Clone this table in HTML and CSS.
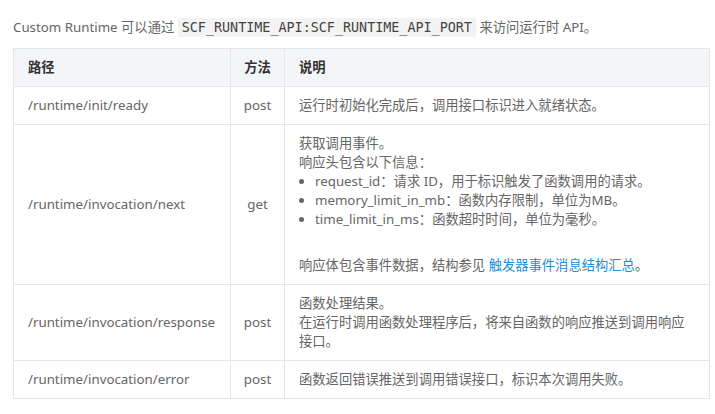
FILE: index.html
```html
<!DOCTYPE html>
<html lang="zh-CN">
<head>
    <meta charset="UTF-8">
    <meta name="viewport" content="width=device-width, initial-scale=1.0">
    <title>Custom Runtime API</title>
    <link rel="stylesheet" href="styles.css">
</head>
<body>

<div class="doc">
    <p class="intro">Custom Runtime 可以通过 <code>SCF_RUNTIME_API:SCF_RUNTIME_API_PORT</code> 来访问运行时 API。</p>

    <table class="api-table">
        <thead>
            <tr>
                <th class="col-path">路径</th>
                <th class="col-method">方法</th>
                <th class="col-desc">说明</th>
            </tr>
        </thead>
        <tbody>
            <tr>
                <td>/runtime/init/ready</td>
                <td class="method">post</td>
                <td>运行时初始化完成后，调用接口标识进入就绪状态。</td>
            </tr>
            <tr>
                <td>/runtime/invocation/next</td>
                <td class="method">get</td>
                <td>
                    获取调用事件。<br>
                    响应头包含以下信息：
                    <ul class="headers">
                        <li>request_id：请求 ID，用于标识触发了函数调用的请求。</li>
                        <li>memory_limit_in_mb：函数内存限制，单位为MB。</li>
                        <li>time_limit_in_ms：函数超时时间，单位为毫秒。</li>
                    </ul>
                    <p class="note">响应体包含事件数据，结构参见 <a href="#">触发器事件消息结构汇总</a>。</p>
                </td>
            </tr>
            <tr>
                <td>/runtime/invocation/response</td>
                <td class="method">post</td>
                <td>函数处理结果。<br>在运行时调用函数处理程序后，将来自函数的响应推送到调用响应接口。</td>
            </tr>
            <tr>
                <td>/runtime/invocation/error</td>
                <td class="method">post</td>
                <td>函数返回错误推送到调用错误接口，标识本次调用失败。</td>
            </tr>
        </tbody>
    </table>
</div>

</body>
</html>
```

FILE: styles.css
```css
/* Basic reset */
* {
    box-sizing: border-box;
}

body {
    margin: 0;
    font-family: "Noto Sans", "Noto Sans CJK SC", sans-serif;
    font-size: 13.3px;
    color: #666;
    background-color: #fff;
}

.doc {
    padding: 16px 5px 0 13px;
}

.intro {
    margin: 0 0 9px;
    line-height: 22px;
}

.intro code {
    font-family: "DejaVu Sans Mono", monospace;
    font-size: 13.4px;
    color: #444;
    background-color: #f3f3f3;
    padding: 2px 4px;
    border-radius: 2px;
}

/* Table styles */
.api-table {
    width: 697px;
    border-collapse: collapse;
    table-layout: fixed;
}

.api-table th, .api-table td {
    border: 1px solid #e6e6e6;
    padding: 9px 14px;
    line-height: 19px;
    text-align: left;
    vertical-align: middle;
}

.api-table th {
    background-color: #f3f5f8;
    color: #333;
    font-weight: bold;
}

.col-path {
    width: 217px;
}

.col-method {
    width: 54px;
}

.api-table th.col-method, .api-table td.method {
    text-align: center;
    padding: 9px 4px;
}

.api-table td:last-child {
    padding-right: 22px;
}

/* Response header list */
.headers {
    margin: 0;
    padding-left: 16px;
}

.note {
    margin: 27px 0 0;
}

.note a {
    color: #1a8fdd;
    text-decoration: none;
}
```
